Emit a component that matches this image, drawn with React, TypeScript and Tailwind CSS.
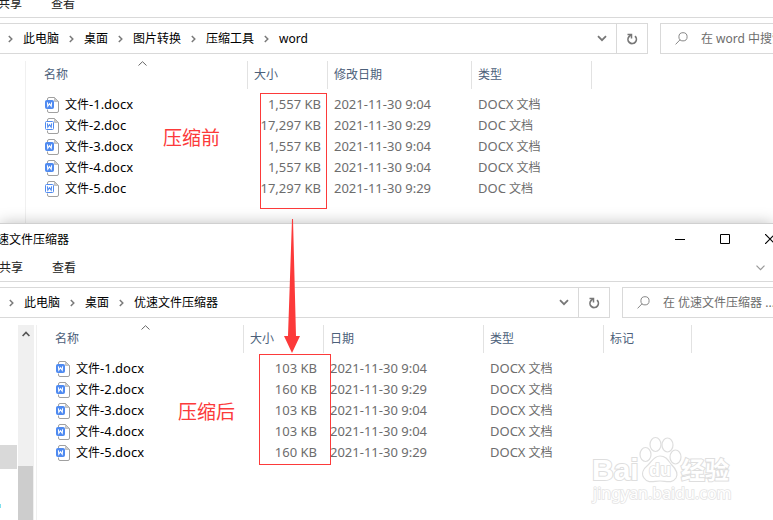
import { Fragment } from "react";

type FileRow = { name: string; size: string; date: string; type: string };

const beforeFiles: FileRow[] = [
  { name: "-1.docx", size: "1,557 KB", date: "2021-11-30 9:04", type: "DOCX" },
  { name: "-2.doc", size: "17,297 KB", date: "2021-11-30 9:29", type: "DOC" },
  { name: "-3.docx", size: "1,557 KB", date: "2021-11-30 9:04", type: "DOCX" },
  { name: "-4.docx", size: "1,557 KB", date: "2021-11-30 9:04", type: "DOCX" },
  { name: "-5.doc", size: "17,297 KB", date: "2021-11-30 9:29", type: "DOC" },
];

const afterFiles: FileRow[] = [
  { name: "-1.docx", size: "103 KB", date: "2021-11-30 9:04", type: "DOCX" },
  { name: "-2.docx", size: "160 KB", date: "2021-11-30 9:29", type: "DOCX" },
  { name: "-3.docx", size: "103 KB", date: "2021-11-30 9:04", type: "DOCX" },
  { name: "-4.docx", size: "103 KB", date: "2021-11-30 9:04", type: "DOCX" },
  { name: "-5.docx", size: "160 KB", date: "2021-11-30 9:29", type: "DOCX" },
];

function FileIcon({ filled }: { filled: boolean }) {
  return (
    <svg width="14" height="16" viewBox="0 0 14 16" fill="none" className="shrink-0">
      <path d="M2.5 4V2Q2.5 .5 4 .5H9.5L13.5 4.5V14Q13.5 15.5 12 15.5H4Q2.5 15.5 2.5 14V12.5" fill="#fff" stroke="#a0a0a0" />
      <path d="M9.5 .5V4.5H13.5Z" fill="#ccc" stroke="#aaa" strokeWidth=".6" />
      <rect x=".5" y="3.5" width="8" height="8" rx="1" fill={filled ? "#4f8af0" : "#fff"} stroke="#4f8af0" />
      <path d="M2.4 5.4L2.8 9.2L4.5 6.8L6.2 9.2L6.6 5.4" stroke={filled ? "#fff" : "#4f8af0"} strokeWidth="1.1" />
    </svg>
  );
}

function Crumbs({ items }: { items: string[] }) {
  return (
    <ol className="flex min-w-0 flex-1 items-center whitespace-nowrap">
      {items.map((item) => (
        <Fragment key={item}>
          <li aria-hidden="true" className="px-2.5">
            <svg width="5" height="8" viewBox="0 0 5 8" fill="none" stroke="#7a7a7a" strokeWidth="1.5">
              <path d="M.8 1L3.8 4L.8 7" />
            </svg>
          </li>
          <li>
            <a href="#" className="text-black">
              {item}
            </a>
          </li>
        </Fragment>
      ))}
    </ol>
  );
}

function AddressRow({ items, search, searchWidth, shift }: { items: string[]; search: string; searchWidth: string; shift: string }) {
  return (
    <div className="mt-[5px] flex h-[31px] gap-3">
      <nav className="flex min-w-0 flex-1 border border-l-0 border-[#d9d9d9]">
        <div className={`flex min-w-0 flex-1 ${shift}`}>
          <Crumbs items={items} />
        </div>
        <button type="button" aria-label="以前的位置" className="flex w-7 items-center justify-center">
          <svg width="10" height="7" viewBox="0 0 10 7" fill="none" stroke="#777" strokeWidth="1.8">
            <path d="M1 1.2L5 5.2L9 1.2" />
          </svg>
        </button>
        <button type="button" aria-label="刷新" className="flex w-[31px] items-center justify-center border-l border-[#d9d9d9]">
          <svg width="12" height="12" viewBox="0 0 12 12" fill="none" stroke="#777" strokeWidth="1.7">
            <path d="M9 3.2A4.2 4.2 0 1 1 3 3.6L5.2 1.6" />
            <path d="M1.5 1.5H5.5V5.5" strokeWidth="1.5" />
          </svg>
        </button>
      </nav>
      <label className={`flex items-center overflow-hidden border border-r-0 border-[#d9d9d9] pl-3.5 ${searchWidth}`}>
        <svg width="13" height="13" viewBox="0 0 13 13" fill="none" stroke="#888" className="shrink-0">
          <circle cx="8" cy="4.8" r="4.1" />
          <path d="M5 7.8L.6 12.4" />
        </svg>
        <input
          type="search"
          aria-label="搜索"
          placeholder={search}
          className="ml-[13px] w-32 shrink-0 outline-none placeholder:text-[#6d6d6d]"
        />
      </label>
    </div>
  );
}

function FileTable({ files, headers, widths }: { files: FileRow[]; headers: string[]; widths: string[] }) {
  return (
    <table className="w-full table-fixed border-collapse text-left">
      <colgroup>
        {widths.map((w, i) => (
          <col key={i} className={w} />
        ))}
        <col />
      </colgroup>
      <thead>
        <tr>
          {headers.map((h, i) => (
            <th key={h} scope="col" className="h-[33px] p-0 align-top font-normal text-[#4c607a]">
              <div className={`relative flex h-7 items-center border-r border-[#e2e2e2] ${i === 0 ? "pl-[18px]" : "pl-1.5"}`}>
                {h}
                {i === 0 && (
                  <svg width="9" height="5" viewBox="0 0 9 5" fill="none" stroke="#666" className="absolute top-0 left-1/2 ml-px">
                    <path d="M.5 4.5L4.5 .7L8.5 4.5" />
                  </svg>
                )}
              </div>
            </th>
          ))}
          <td />
        </tr>
      </thead>
      <tbody className="text-[#6d6d6d]">
        {files.map((f) => (
          <tr key={f.name} className="h-[21px] whitespace-nowrap">
            <td className="p-0 pl-[19px] text-black">
              <div className="flex h-[21px] items-center gap-1.5">
                <FileIcon filled={f.name.endsWith("x")} />
                <span>
                  文件<span className="text-[13px]">{f.name}</span>
                </span>
              </div>
            </td>
            <td className="p-0 pr-[7px] text-right">
              <span className="text-[13px]">{f.size}</span>
            </td>
            <td className="p-0 pl-1.5">
              <span className="text-[13px]">{f.date}</span>
            </td>
            <td className="p-0 pl-1.5">
              <span className="text-[13px]">{f.type}</span> 文档
            </td>
          </tr>
        ))}
      </tbody>
    </table>
  );
}

function Watermark() {
  return (
    <svg width="146" height="72" viewBox="0 0 146 72" className="absolute top-[434px] left-[588px]" fill="#fff" stroke="#dedede" strokeWidth="1.2">
      <text x="4" y="46" fontSize="30" fontWeight="700" fontFamily="Liberation Sans, sans-serif" strokeWidth="2" paintOrder="stroke">
        Bai
      </text>
      <ellipse cx="57.5" cy="20.5" rx="5.5" ry="7" />
      <ellipse cx="67.5" cy="10.5" rx="5.5" ry="7" />
      <ellipse cx="79.5" cy="11" rx="5.5" ry="7" />
      <ellipse cx="87.5" cy="23" rx="5.5" ry="7" />
      <path d="M72 22C66 22 64 27 60 31C55 35 53 40 56 44C60 50 66 47 72 47C78 47 84 50 88 44C91 39 87 34 83 30C80 26 78 22 72 22Z" />
      <text x="61" y="42" fontSize="18" fontWeight="700" fontFamily="Liberation Sans, sans-serif" strokeWidth="1.6" paintOrder="stroke">
        du
      </text>
      <text x="93" y="45" fontSize="24" fontWeight="700" fontFamily="Noto Sans CJK SC, sans-serif" strokeWidth="2" paintOrder="stroke">
        经验
      </text>
      <text x="5" y="65" fontSize="16" fontFamily="Noto Sans, sans-serif" stroke="#e4e4e4" strokeWidth="1.6" paintOrder="stroke">
        jingyan.baidu.com
      </text>
    </svg>
  );
}

export default function App() {
  return (
    <main className="relative flex min-h-screen flex-col overflow-hidden bg-white font-['Noto_Sans','Noto_Sans_CJK_SC',sans-serif] text-xs leading-4 text-[#222]">
      <section>
        <div className="flex h-[18px] items-start gap-[29px] border-b border-[#d9d9d9]">
          <button type="button" className="-mt-1 -ml-0.5">共享</button>
          <button type="button" className="-mt-1">查看</button>
        </div>
        <AddressRow
          items={["此电脑", "桌面", "图片转换", "压缩工具", "word"]}
          search="在 word 中搜索"
          searchWidth="w-[113px]"
          shift="-ml-0.5"
        />
        <div className="mt-[7px] flex h-[162px]">
          <div className="w-[26px] shrink-0 border-r border-[#f0f0f0]" />
          <div className="min-w-0 flex-1">
            <FileTable
              files={beforeFiles}
              headers={["名称", "大小", "修改日期", "类型"]}
              widths={["w-[222px]", "w-[80px]", "w-[144px]", "w-[120px]"]}
            />
          </div>
        </div>
      </section>

      <section className="relative flex flex-1 flex-col border-t border-[#d0d0d0] bg-white shadow-[0_0_14px_rgba(0,0,0,0.25)]">
        <header className="flex h-[31px] items-center justify-between overflow-hidden">
          <h1 className="-ml-[3px] text-black">速文件压缩器</h1>
          <div className="-mr-[19px] flex h-full pb-px">
            <button type="button" aria-label="最小化" className="flex w-[45px] items-center justify-center">
              <svg width="10" height="10" viewBox="0 0 10 10" stroke="#000">
                <path d="M0 5.5H10" />
              </svg>
            </button>
            <button type="button" aria-label="最大化" className="flex w-[45px] items-center justify-center">
              <svg width="10" height="10" viewBox="0 0 10 10" fill="none" stroke="#000">
                <path d="M.5 .5H9.5V9.5H.5Z" />
              </svg>
            </button>
            <button type="button" aria-label="关闭" className="flex w-[45px] items-center justify-center">
              <svg width="10" height="10" viewBox="0 0 10 10" stroke="#000" strokeWidth="1.2">
                <path d="M0 0L10 10M10 0L0 10" />
              </svg>
            </button>
          </div>
        </header>
        <div className="flex h-[27px] items-center gap-[29px] border-b border-[#d9d9d9]">
          <button type="button" className="-ml-px">共享</button>
          <button type="button">查看</button>
          <button type="button" aria-label="展开功能区" className="mr-2 ml-auto">
            <svg width="9" height="6" viewBox="0 0 9 6" fill="none" stroke="#999" strokeWidth="1.2">
              <path d="M.5 .7L4.5 4.7L8.5 .7" />
            </svg>
          </button>
        </div>
        <AddressRow
          items={["此电脑", "桌面", "优速文件压缩器"]}
          search="在 优速文件压缩器 ..."
          searchWidth="w-[151px]"
          shift="-ml-px"
        />
        <div className="mt-[7px] flex flex-1">
          {/* navigation pane, scrolled off to the left */}
          <div className="w-[18px] shrink-0 pt-[120px]">
            <div className="h-6 w-[17px] bg-[#d9d9d9]" />
            <div className="mt-[35px] h-1 w-px bg-[#7fe0ee]" />
          </div>
          <div className="flex w-4 shrink-0 flex-col items-center bg-[#f0f0f0]">
            <svg width="8" height="6" viewBox="0 0 8 6" fill="none" stroke="#555" strokeWidth="1.6" className="mt-1.5">
              <path d="M.6 5L4 1.4L7.4 5" />
            </svg>
            <div className="mt-[129px] w-[15px] flex-1 self-start bg-[#cdcdcd]" />
          </div>
          <div className="w-[3px] shrink-0 border-r border-[#f0f0f0]" />
          <div className="min-w-0 flex-1">
            <FileTable
              files={afterFiles}
              headers={["名称", "大小", "日期", "类型", "标记"]}
              widths={["w-[207px]", "w-[80px]", "w-[160px]", "w-[120px]", "w-[88px]"]}
            />
          </div>
        </div>
      </section>

      {/* red annotations */}
      <div className="absolute top-[93px] left-[260px] h-[116px] w-[67px] border border-[#fc3a3a]" />
      <div className="absolute top-[354px] left-[259px] h-[111px] w-[72px] border border-[#fc3a3a]" />
      <p className="absolute top-[126px] left-[163px] text-[19px] leading-6 text-[#fc3a3a]">压缩前</p>
      <p className="absolute top-[400px] left-[178px] text-[19px] leading-6 text-[#fc3a3a]">压缩后</p>
      <svg width="16" height="134" viewBox="0 0 16 134" fill="#fc3a3a" className="absolute top-[219px] left-[284px]">
        <path d="M8 0H9L12 117H16L8 134L0 117H4Z" />
      </svg>
      <Watermark />
    </main>
  );
}
